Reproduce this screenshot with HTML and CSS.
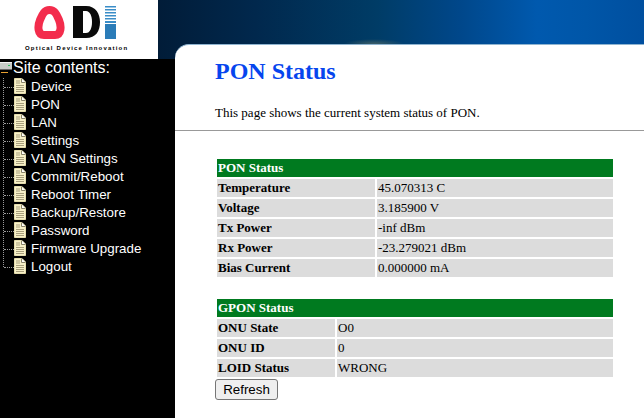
FILE: index.html
```html
<!DOCTYPE html>
<html lang="en">
<head>
<meta charset="utf-8">
<title>PON Status</title>
<link rel="stylesheet" href="styles.css">
</head>
<body>
<svg class="sprites" width="0" height="0" aria-hidden="true">
  <symbol id="page" viewBox="0 0 12 16">
    <path d="M.5.5H8L11.500 4V15.500H.5Z" fill="#f7f0c8" stroke="#e4dcac"/>
    <path d="M7.500 .5V4.500H11.500" fill="#fff" stroke="#8a8468"/>
    <path d="M2 3H6M2 5H6M2 7.500H10M2 9.500H10M2 11.500H10M2 13.500H10" stroke="#a89f7c" stroke-width="1"/>
  </symbol>
</svg>
<header class="top">
  <div class="logo">
    <svg class="logo-mark" width="82" height="33" viewBox="0 0 82 33">
      <path d="M15.500 4C10 4 8.500 8.500 6 14C3.500 20 3.500 29 10 29H21C27.500 29 27.500 20 25 14C22.500 8.500 21 4 15.500 4Z" fill="none" stroke="#f32c4c" stroke-width="8" stroke-linejoin="round"/>
      <path fill-rule="evenodd" d="M39 0H52C62 0 66 8 66 16C66 25 62 32 52 32H39ZM49 5V27H52C56 27 58 22 58 16C58 10 56 5 52 5Z" fill="#0a0a0a"/>
      <g fill="#3a8dc8">
        <rect x="71" y="0" width="11" height="1.500"/>
        <rect x="71" y="3" width="11" height="1.500"/>
        <rect x="71" y="6" width="11" height="1.500"/>
        <rect x="71" y="9" width="11" height="1.500"/>
        <rect x="71" y="12" width="11" height="1.500"/>
        <rect x="71" y="15" width="11" height="2"/>
      </g>
      <rect x="71" y="18" width="11" height="15" fill="#2b7cb8"/>
    </svg>
    <div class="logo-text">Optical Device Innovation</div>
  </div>
  <div class="banner"></div>
</header>
<div class="body-row">
  <nav class="side">
    <div class="root">
      <svg class="root-icon" width="12" height="12" viewBox="0 0 12 12">
        <rect x="0" y="0" width="12" height="7" fill="#c8ccc8"/>
        <rect x="0" y="0" width="12" height="1" fill="#f4f4f4"/>
        <rect x="8" y="3" width="2" height="1" fill="#30c060"/>
        <rect x="0" y="7" width="12" height="1" fill="#6a6a6a"/>
        <rect x="1" y="10" width="7" height="1" fill="#e8a030"/>
      </svg>
      <span>Site contents:</span>
    </div>
    <ul class="tree">
      <li class="item"><svg class="page" width="12" height="16"><use href="#page"/></svg><a class="link">Device</a></li>
      <li class="item"><svg class="page" width="12" height="16"><use href="#page"/></svg><a class="link">PON</a></li>
      <li class="item"><svg class="page" width="12" height="16"><use href="#page"/></svg><a class="link">LAN</a></li>
      <li class="item"><svg class="page" width="12" height="16"><use href="#page"/></svg><a class="link">Settings</a></li>
      <li class="item"><svg class="page" width="12" height="16"><use href="#page"/></svg><a class="link">VLAN Settings</a></li>
      <li class="item"><svg class="page" width="12" height="16"><use href="#page"/></svg><a class="link">Commit/Reboot</a></li>
      <li class="item"><svg class="page" width="12" height="16"><use href="#page"/></svg><a class="link">Reboot Timer</a></li>
      <li class="item"><svg class="page" width="12" height="16"><use href="#page"/></svg><a class="link">Backup/Restore</a></li>
      <li class="item"><svg class="page" width="12" height="16"><use href="#page"/></svg><a class="link">Password</a></li>
      <li class="item"><svg class="page" width="12" height="16"><use href="#page"/></svg><a class="link">Firmware Upgrade</a></li>
      <li class="item"><svg class="page" width="12" height="16"><use href="#page"/></svg><a class="link">Logout</a></li>
    </ul>
  </nav>
  <main class="panel">
    <h1 class="title">PON Status</h1>
    <p class="intro">This page shows the current system status of PON.</p>
    <hr class="rule">
    <table class="data wide">
      <colgroup><col class="key-col"><col></colgroup>
      <tr><th class="head" colspan="2">PON Status</th></tr>
      <tr><th class="key">Temperature</th><td class="val">45.070313 C</td></tr>
      <tr><th class="key">Voltage</th><td class="val">3.185900 V</td></tr>
      <tr><th class="key">Tx Power</th><td class="val">-inf dBm</td></tr>
      <tr><th class="key">Rx Power</th><td class="val">-23.279021 dBm</td></tr>
      <tr><th class="key">Bias Current</th><td class="val">0.000000 mA</td></tr>
    </table>
    <table class="data narrow">
      <colgroup><col class="key-col"><col></colgroup>
      <tr><th class="head" colspan="2">GPON Status</th></tr>
      <tr><th class="key">ONU State</th><td class="val">O0</td></tr>
      <tr><th class="key">ONU ID</th><td class="val">0</td></tr>
      <tr><th class="key">LOID Status</th><td class="val">WRONG</td></tr>
    </table>
    <button class="refresh" type="button">Refresh</button>
  </main>
</div>
</body>
</html>
```
FILE: styles.css
```css
html, body {
  margin: 0;
  padding: 0;
  width: 644px;
  height: 418px;
  overflow: hidden;
  background: #000;
}
.sprites {
  display: block;
  height: 0;
}
.top {
  display: flex;
  height: 59px;
}
.logo {
  width: 158px;
  background: #fff;
  box-sizing: border-box;
  padding: 6px 0 0 34px;
}
.logo-mark {
  display: block;
  margin-bottom: 6px;
}
.logo-text {
  margin-left: -9px;
  font: bold 6px/7px "Liberation Sans", sans-serif;
  letter-spacing: 1.2px;
  color: #000;
  white-space: nowrap;
}
.banner {
  flex: 1;
  background:
    radial-gradient(ellipse 30px 5px at 216px 44px, #3f5f68 0, rgba(0, 50, 80, 0) 100%),
    linear-gradient(90deg, #011c38 0, #01284d 20%, #003c66 45%, #00478a 62%, #0059ae 78%, #0056a8 88%, #004f9f 100%);
}
.body-row {
  display: flex;
  height: 359px;
}
.side {
  width: 175px;
  flex: none;
  background: #000;
  font-family: "Liberation Sans", sans-serif;
  color: #fff;
}
.root {
  display: flex;
  align-items: center;
  height: 18px;
  font-size: 16px;
  line-height: 18px;
}
.root-icon {
  flex: none;
  margin-right: 1px;
}
.tree {
  list-style: none;
  margin: 1px 0 0 3px;
  padding: 0;
  border-left: 1px dotted #999;
  height: 189px;
}
.item {
  display: flex;
  align-items: center;
  height: 18px;
  font-size: 13.333px;
  line-height: 18px;
}
.item::before {
  content: "";
  width: 10px;
  border-top: 1px dotted #999;
  flex: none;
}
.page {
  flex: none;
  margin-right: 5px;
  margin-top: -2px;
}
.link {
  color: #fff;
}
.panel {
  flex: 1;
  margin-top: -15px;
  background: #fff;
  border-top-left-radius: 14px;
  border-top: 1px solid #8fb4d0;
  box-sizing: border-box;
  height: 374px;
  font-family: "Liberation Serif", serif;
  color: #000;
}
.title {
  margin: 0;
  padding: 12px 0 0 40px;
  font-size: 24px;
  line-height: 28px;
  font-weight: bold;
  color: #0645ee;
}
.intro {
  margin: 0;
  padding: 20px 0 0 40px;
  font-size: 13px;
  line-height: 15px;
}
.rule {
  margin: 10px 0 0;
  height: 0;
  border: 0;
  border-top: 1px solid #999;
}
.data {
  margin: 26px 0 0 40px;
  border-collapse: separate;
  border-spacing: 2px;
  table-layout: fixed;
  width: 400px;
  font-size: 13px;
}
.wide .key-col {
  width: 158px;
}
.narrow .key-col {
  width: 118px;
}
.narrow {
  margin-top: 18px;
}
.head {
  box-sizing: border-box;
  background: #007a1f;
  color: #fff;
  text-align: left;
  height: 18px;
  padding: 0 1px 2px;
  line-height: 15px;
}
.key, .val {
  box-sizing: border-box;
  background: #dcdcdc;
  height: 18px;
  padding: 0 1px 2px;
  text-align: left;
  line-height: 15px;
}
.refresh {
  display: block;
  margin: 0 0 0 40px;
  width: 63px;
  height: 21px;
  padding: 0;
  font: 13.333px "Liberation Sans", sans-serif;
  color: #000;
  background: #efefef;
  border: 1px solid #767676;
  border-radius: 3px;
}
```
